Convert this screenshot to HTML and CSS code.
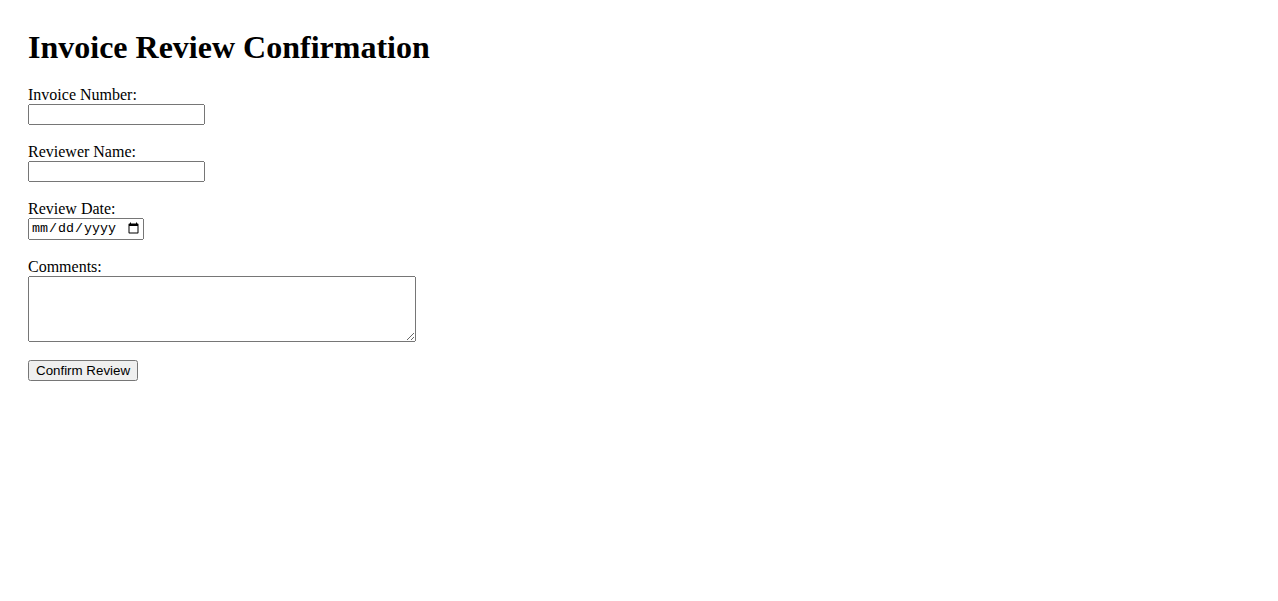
FILE: index.html
```html
<!DOCTYPE html>
<html lang="en">
  <head>
    <meta charset="UTF-8" />
    <meta name="viewport" content="width=device-width, initial-scale=1.0" />
    <title>Invoice Review Confirmation</title>
    <link rel="stylesheet" href="styles.css">
  </head>
  <body>
    <h1 class="title">Invoice Review Confirmation</h1>

    <form class="review-form">
      <label for="invoiceNumber">Invoice Number:</label><br />
      <input type="text" id="invoiceNumber" name="invoiceNumber" class="text-input" /><br /><br />

      <label for="reviewerName">Reviewer Name:</label><br />
      <input type="text" id="reviewerName" name="reviewerName" class="text-input" /><br /><br />

      <label for="reviewDate">Review Date:</label><br />
      <input type="date" id="reviewDate" name="reviewDate" class="date-input" /><br /><br />

      <label for="comments">Comments:</label><br />
      <textarea id="comments" name="comments" rows="4" cols="50" class="comments"></textarea><br /><br />

      <button type="submit" class="btn">Confirm Review</button>
    </form>
  </body>
</html>
```

FILE: styles.css
```css
body {
  margin: 28px;
  font-family: "Liberation Serif", "Times New Roman", serif;
  background: #ffffff;
  color: #000000;
}

.title {
  margin: 1px 0 20px 0;
  font-size: 32px;
  font-weight: bold;
}

.review-form .text-input,
.review-form .btn {
  font-family: "Liberation Sans", Arial, sans-serif;
}

.text-input {
  box-sizing: border-box;
  width: 177px;
  height: 21px;
}

.review-form .date-input {
  box-sizing: border-box;
  width: 116px;
  height: 22px;
  font-family: "Liberation Mono", "Courier New", monospace;
}

.comments {
  box-sizing: border-box;
  width: 388px;
  height: 66px;
  margin-bottom: -4px;
  font-family: "Liberation Mono", "Courier New", monospace;
}
```
